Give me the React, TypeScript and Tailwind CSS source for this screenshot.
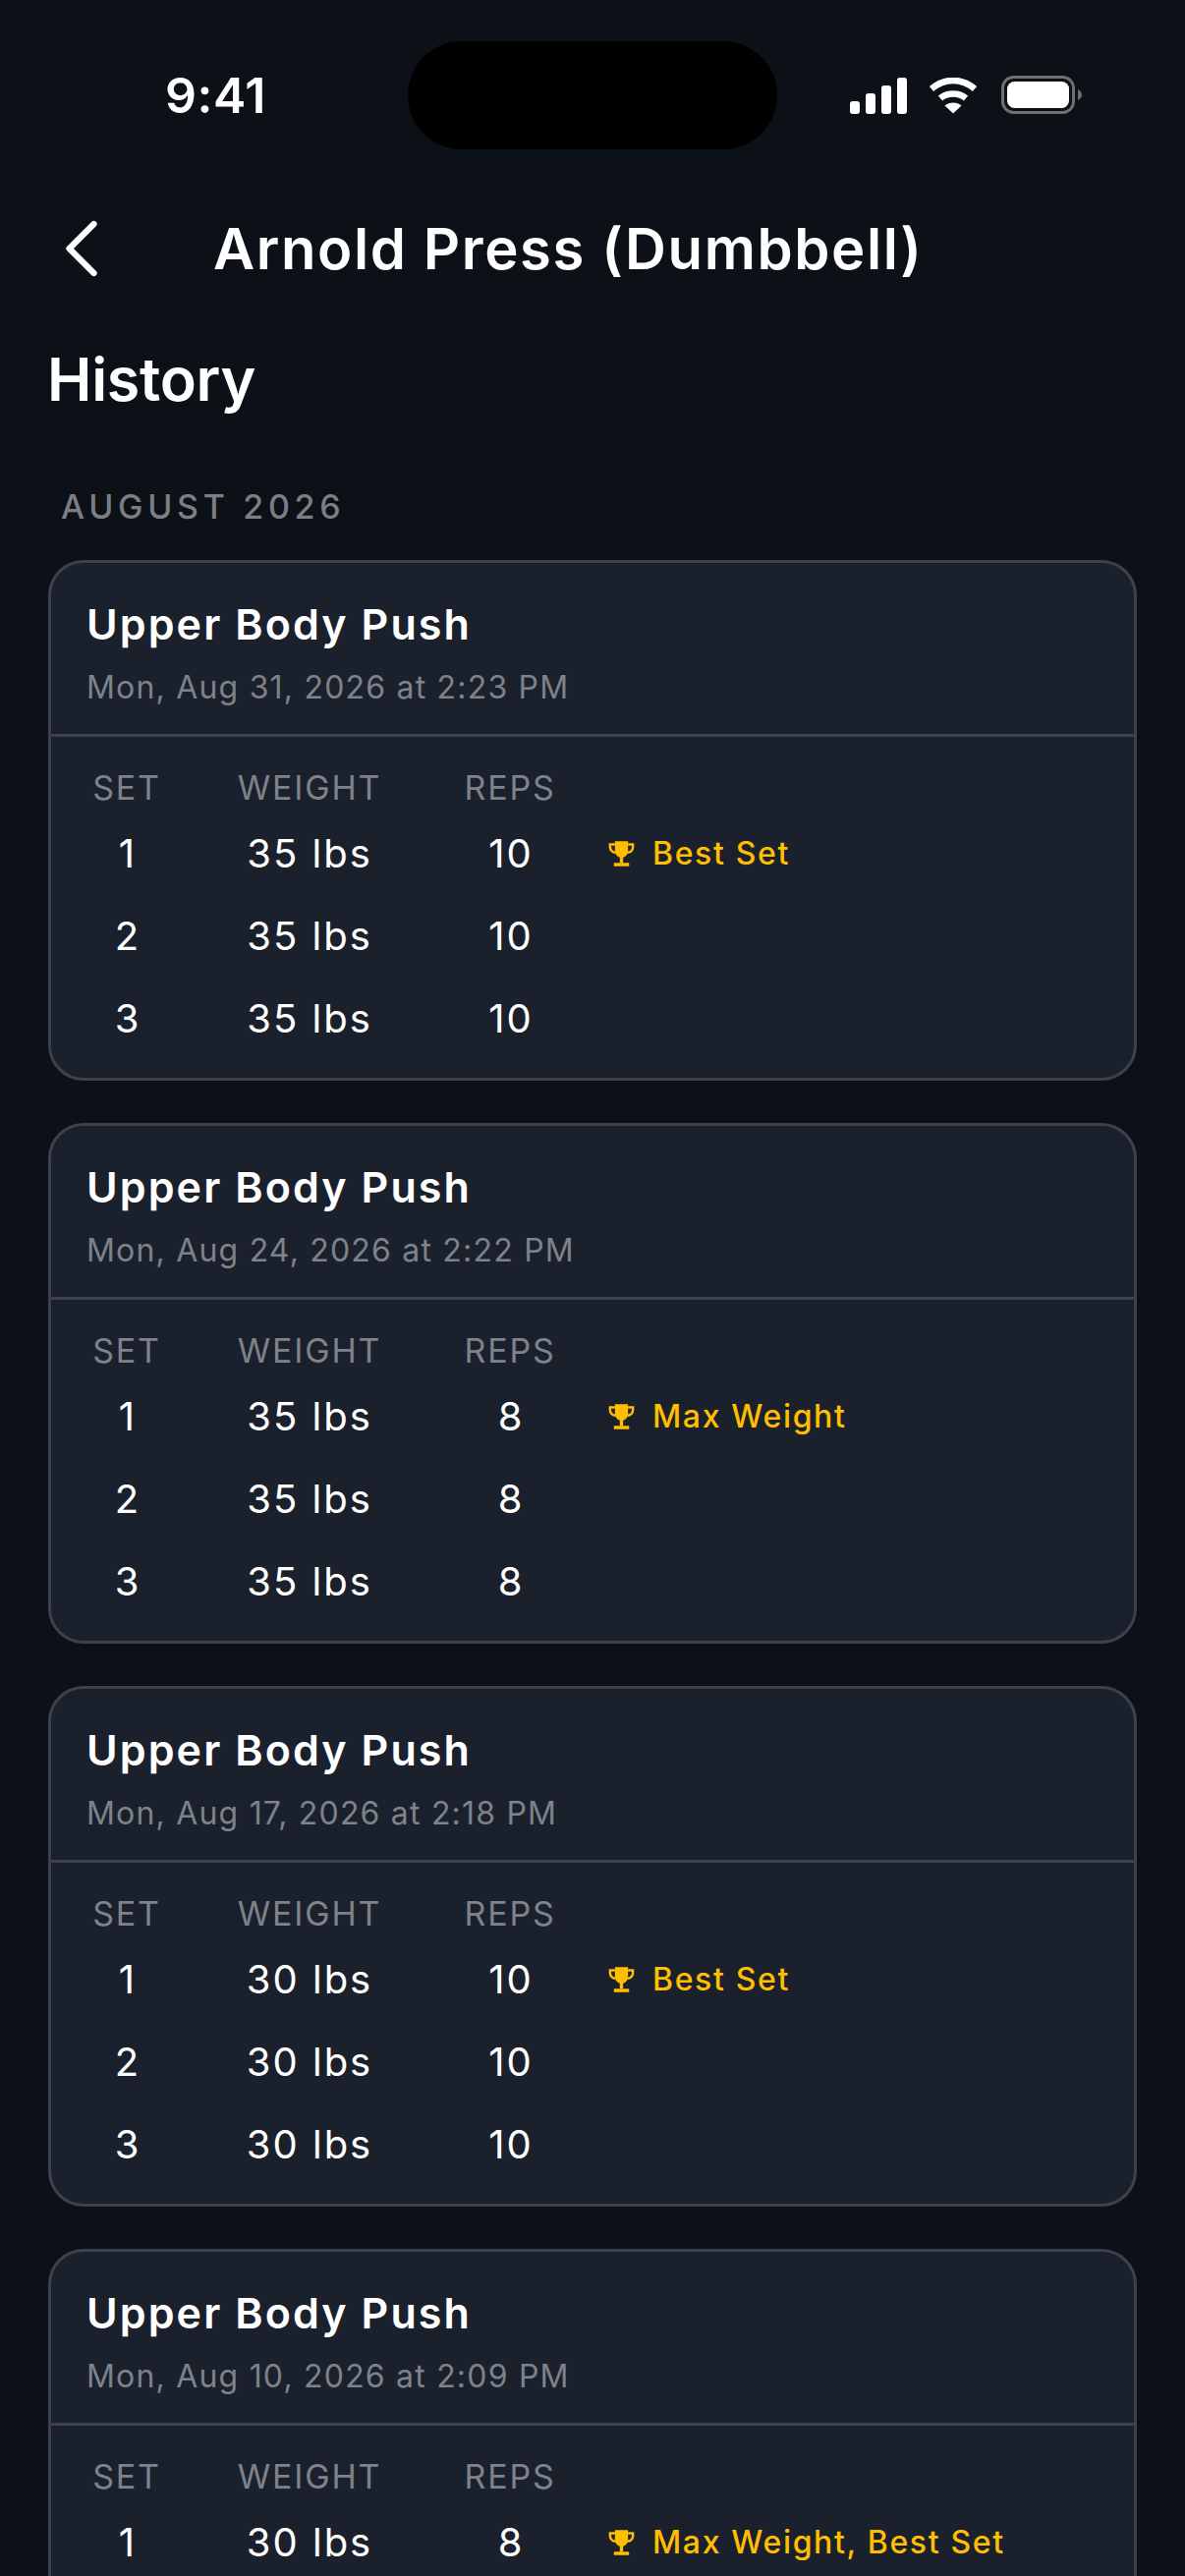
import { ChevronLeft } from "lucide-react";

const FONT = "font-['Inter','Liberation_Sans',sans-serif]";

type SetRow = { set: number; weight: string; reps: number; badge?: string };
type Session = { date: string; rows: SetRow[] };

const sessions: Session[] = [
  {
    date: "Mon, Aug 31, 2026 at 2:23 PM",
    rows: [
      { set: 1, weight: "35 lbs", reps: 10, badge: "Best Set" },
      { set: 2, weight: "35 lbs", reps: 10 },
      { set: 3, weight: "35 lbs", reps: 10 },
    ],
  },
  {
    date: "Mon, Aug 24, 2026 at 2:22 PM",
    rows: [
      { set: 1, weight: "35 lbs", reps: 8, badge: "Max Weight" },
      { set: 2, weight: "35 lbs", reps: 8 },
      { set: 3, weight: "35 lbs", reps: 8 },
    ],
  },
  {
    date: "Mon, Aug 17, 2026 at 2:18 PM",
    rows: [
      { set: 1, weight: "30 lbs", reps: 10, badge: "Best Set" },
      { set: 2, weight: "30 lbs", reps: 10 },
      { set: 3, weight: "30 lbs", reps: 10 },
    ],
  },
  {
    date: "Mon, Aug 10, 2026 at 2:09 PM",
    rows: [
      { set: 1, weight: "30 lbs", reps: 8, badge: "Max Weight, Best Set" },
      { set: 2, weight: "30 lbs", reps: 8 },
      { set: 3, weight: "30 lbs", reps: 8 },
    ],
  },
];

function Trophy() {
  return (
    <svg width="31" height="31" viewBox="0 0 28 28" fill="none" className="shrink-0">
      <path d="M8 2h12v9a6 6 0 0 1-12 0V2Z" fill="#FFBF00" />
      <path d="M8 5H3.500v2.500A5 5 0 0 0 8.500 12.500M20 5h4.500v2.500A5 5 0 0 1 19.500 12.500" stroke="#FFBF00" strokeWidth="2.2" />
      <rect x="12.500" y="16" width="3" height="6" fill="#FFBF00" />
      <rect x="7" y="22" width="14" height="3" rx="0.500" fill="#FFBF00" />
    </svg>
  );
}

function StatusBar() {
  return (
    <div className="flex h-[194px] items-center">
      <div className="w-[415px] pl-[168px] text-[50px] leading-none font-semibold tracking-[0.500px] text-white">9:41</div>
      <div className="h-[110px] w-[376px] rounded-[55px] bg-black" />
      <div className="ml-[74px] flex items-center gap-[22px]">
        <svg width="58" height="37" viewBox="0 0 58 37" fill="white">
          <rect x="0" y="24" width="10" height="13" rx="3" />
          <rect x="16" y="16" width="10" height="21" rx="3" />
          <rect x="32" y="8" width="10" height="29" rx="3" />
          <rect x="48" y="0" width="10" height="37" rx="3" />
        </svg>
        <svg width="50" height="37" viewBox="0 0 50 37" fill="none" stroke="white" strokeWidth="6.500">
          <path d="M3 11.500C16 0 34 0 47 11.500" />
          <path d="M12 21C19 15 31 15 38 21" />
          <path d="M25 36.500 L16.500 28.500C21 24.500 29 24.500 33.500 28.500Z" fill="white" stroke="none" />
        </svg>
        <svg width="82" height="40" viewBox="0 0 82 40" fill="none" className="ml-[2px]">
          <rect x="1.500" y="1.500" width="72" height="36" rx="11" stroke="#6E6F73" strokeWidth="3" />
          <rect x="6" y="6" width="63" height="27" rx="7.500" fill="white" />
          <path d="M78 14c2.500 1 4 3 4 5.500S80.500 24 78 25Z" fill="#6E6F73" />
        </svg>
      </div>
    </div>
  );
}

function SessionCard({ session }: { session: Session }) {
  return (
    <div className="h-[530px] shrink-0 overflow-hidden rounded-[36px] border-[3px] border-[#3d414c] bg-[#1b212c]">
      <div className="h-[177px] border-b-[3px] border-[#3d414c] pl-[36px] pt-[34px]">
        <div className="text-[43px] leading-[56px] font-semibold tracking-[2.100px] text-white">Upper Body Push</div>
        <div className="mt-[17px] text-[32px] leading-[40px] tracking-[1.200px] text-[#7e828a]">{session.date}</div>
      </div>
      <div className="pt-[28px]">
        <div className="flex h-[49px] items-center pb-[2px] text-[34px] leading-none tracking-[1.800px] text-[#7e828a]">
          <div className="ml-[18px] w-[118px] text-center">SET</div>
          <div className="w-[254px] text-center">WEIGHT</div>
          <div className="w-[154px] text-center">REPS</div>
        </div>
        {session.rows.map((row) => (
          <div key={row.set} className="flex h-[84px] items-center text-[40px] tracking-[2px] text-white">
            <div className="ml-[19px] w-[118px] text-center">{row.set}</div>
            <div className="-ml-[1px] w-[254px] text-center">{row.weight}</div>
            <div className="ml-[1px] w-[154px] text-center">{row.reps}</div>
            {row.badge && (
              <div className="ml-[20px] flex items-center gap-[16px] text-[32px] font-medium tracking-[1.650px] text-[#ffbf00]">
                <Trophy />
                <span>{row.badge}</span>
              </div>
            )}
          </div>
        ))}
      </div>
    </div>
  );
}

export default function App() {
  return (
    <div className={`${FONT} h-[2622px] w-[1206px] overflow-hidden bg-[#0c1017]`}>
      <StatusBar />
      <div className="flex h-[118px] items-center">
        <ChevronLeft className="ml-[33px] shrink-0 text-white" size={100} strokeWidth={1.5} />
        <div className="ml-[84px] text-[58px] leading-none font-semibold tracking-[1.600px] text-white">Arnold Press (Dumbbell)</div>
      </div>
      <div className="mt-[34px] pl-[48px] text-[61px] leading-[80px] font-semibold tracking-[-0.300px] text-white">History</div>
      <div className="mt-[68px] pl-[62px] text-[34px] leading-[44px] font-medium tracking-[4.700px] text-[#7c7e84]">AUGUST 2026</div>
      <div className="mx-[49px] mt-[32px] flex flex-col gap-[43px]">
        {sessions.map((s) => (
          <SessionCard key={s.date} session={s} />
        ))}
      </div>
    </div>
  );
}
